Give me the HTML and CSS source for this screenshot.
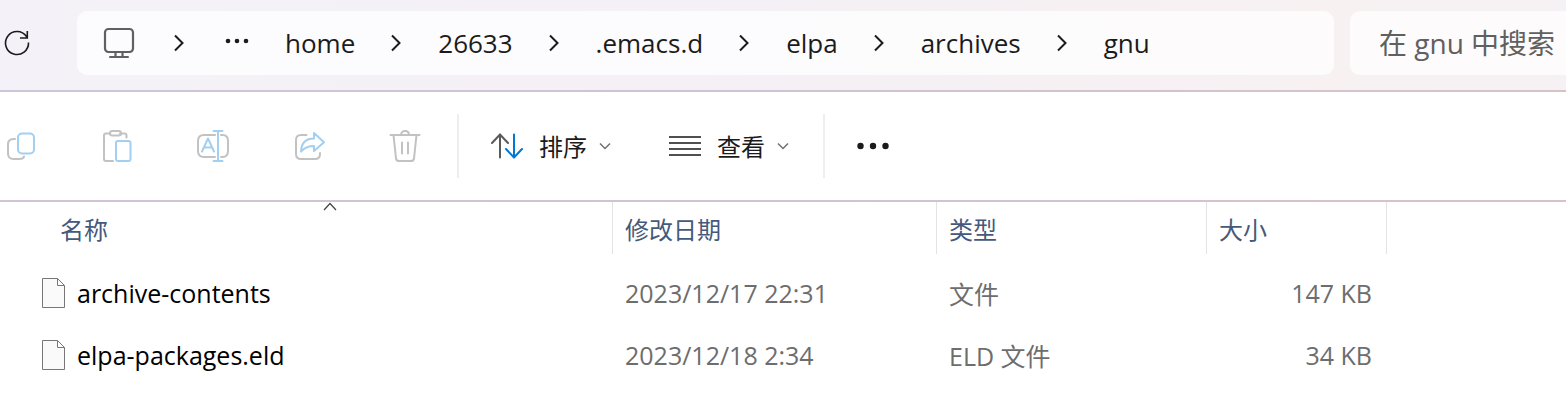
FILE: index.html
```html
<!DOCTYPE html>
<html lang="zh-CN">
<head>
<meta charset="utf-8">
<title>gnu</title>
<link rel="stylesheet" href="styles.css">
</head>
<body>
<header class="navbar">
  <button class="icon-btn refresh" aria-label="刷新">
    <svg width="28" height="28" viewBox="0 0 28 28" fill="none" stroke="#1b1b1b" stroke-width="1.6"><path d="M25.5 13.5A11.5 11.5 0 1 1 23.5 7.500L24.500 9M24.300 2V9H17"/></svg>
  </button>
  <nav class="address" aria-label="地址">
    <button class="icon-btn" aria-label="此电脑">
      <svg width="32" height="32" viewBox="0 0 32 32" fill="none" stroke="#606060" stroke-width="2.2"><rect x="2" y="2" width="28" height="23" rx="3.5"/><path d="M12.500 25v5M19.500 25v5"/><path d="M7 30h18" stroke-width="2" stroke-linecap="round"/></svg>
    </button>
    <svg class="sep first" width="10" height="18" viewBox="0 0 10 18"><path d="M1 1.500 8.500 9 1 16.500"/></svg>
    <button class="icon-btn more" aria-label="更多">
      <svg width="24" height="18" viewBox="0 0 24 18" fill="#1b1b1b"><circle cx="3" cy="7" r="2.300"/><circle cx="12" cy="7" r="2.300"/><circle cx="21" cy="7" r="2.300"/></svg>
    </button>
    <button class="crumb">home</button>
    <svg class="sep" width="10" height="18" viewBox="0 0 10 18"><path d="M1 1.500 8.500 9 1 16.500"/></svg>
    <button class="crumb">26633</button>
    <svg class="sep" width="10" height="18" viewBox="0 0 10 18"><path d="M1 1.500 8.500 9 1 16.500"/></svg>
    <button class="crumb">.emacs.d</button>
    <svg class="sep" width="10" height="18" viewBox="0 0 10 18"><path d="M1 1.500 8.500 9 1 16.500"/></svg>
    <button class="crumb">elpa</button>
    <svg class="sep" width="10" height="18" viewBox="0 0 10 18"><path d="M1 1.500 8.500 9 1 16.500"/></svg>
    <button class="crumb">archives</button>
    <svg class="sep" width="10" height="18" viewBox="0 0 10 18"><path d="M1 1.500 8.500 9 1 16.500"/></svg>
    <button class="crumb">gnu</button>
  </nav>
  <input class="search" type="text" aria-label="搜索" placeholder="在 gnu 中搜索">
</header>

<div class="toolbar" role="toolbar">
  <div class="tools">
    <button class="icon-btn" aria-label="复制" disabled>
      <svg class="tool" width="36" height="36" viewBox="0 0 36 36"><path class="g" d="M12 11h-1.500Q5 11 5 16.500V25.500Q5 31 10.500 31H16Q20.500 31 21 28.500"/><rect class="b" x="15" y="5.500" width="16" height="20" rx="4"/></svg>
    </button>
    <button class="icon-btn" aria-label="粘贴" disabled>
      <svg class="tool" width="36" height="36" viewBox="0 0 36 36"><path class="g" d="M11 5.500H7Q5 5.500 5 7.500V31Q5 33 7 33H14M21 5.500H25.500Q27.500 5.500 27.500 7.500V9.500"/><rect class="g" x="11" y="3" width="11" height="4.500" rx="2.200"/><rect class="b" x="17" y="13" width="14.500" height="20" rx="2"/></svg>
    </button>
    <button class="icon-btn" aria-label="重命名" disabled>
      <svg class="tool" width="36" height="36" viewBox="0 0 36 36"><path class="g" d="M20 7H9Q3 7 3 13V23Q3 29 9 29H20M26 7H27.500Q33 7 33 13V23Q33 29 27.500 29H26"/><path class="b" d="M23 3V33M18.500 3H27.500M18.500 33H27.500M7 23.500 13 10.500 19 23.500M9 19.500H17"/></svg>
    </button>
    <button class="icon-btn" aria-label="共享" disabled>
      <svg class="tool" width="36" height="36" viewBox="0 0 36 36"><path class="g" d="M15.500 7H10Q5 7 5 12V26Q5 31 10 31H24Q29 31 29 26V25"/><path class="b" d="M23 5 33 14.300 23 23V18Q15 18 10 23.500Q10.500 10.500 23 10.500Z"/></svg>
    </button>
    <button class="icon-btn" aria-label="删除" disabled>
      <svg class="tool" width="36" height="36" viewBox="0 0 36 36"><path class="g" d="M3.500 7H32.500M6.500 7 9 30.500Q9.400 33 12 33H24Q26.600 33 27 30.500L29.500 7M14 7C14 1.700 22 1.700 22 7M15 14.500V25.500M21 14.500V25.500"/></svg>
    </button>
  </div>
  <span class="divider"></span>
  <div class="menus">
    <button class="menu">
      <svg width="32" height="32" viewBox="0 0 32 32" fill="none" stroke-width="2" stroke-linecap="round"><path stroke="#5a5a5a" d="M9 27.500V4.500M1 13 9 4.500 17 13"/><path stroke="#0078d4" d="M23 4.500V27.500M15 19 23 27.500 31 19"/></svg>
      <span>排序</span>
      <svg class="caret" width="12" height="8" viewBox="0 0 12 8"><path d="M1 1.500 6 6.500 11 1.500"/></svg>
    </button>
    <button class="menu">
      <svg width="32" height="32" viewBox="0 0 32 32" stroke="#505050" stroke-width="2"><path d="M0 7H32M0 13H32M0 19H32M0 25H32"/></svg>
      <span>查看</span>
      <svg class="caret" width="12" height="8" viewBox="0 0 12 8"><path d="M1 1.500 6 6.500 11 1.500"/></svg>
    </button>
  </div>
  <span class="divider"></span>
  <button class="icon-btn" aria-label="查看更多">
    <svg width="32" height="8" viewBox="0 0 32 8" fill="#1b1b1b"><circle cx="3.500" cy="4" r="3.200"/><circle cx="16" cy="4" r="3.200"/><circle cx="28.500" cy="4" r="3.200"/></svg>
  </button>
</div>

<table class="files">
  <colgroup><col class="c-name"><col class="c-date"><col class="c-type"><col class="c-size"><col></colgroup>
  <thead>
    <tr>
      <th class="name" aria-sort="ascending"><button class="sort">名称<svg class="sort-mark" width="14" height="9" viewBox="0 0 14 9"><path d="M1 8 7 1.500 13 8"/></svg></button></th>
      <th><button class="sort">修改日期</button></th>
      <th><button class="sort">类型</button></th>
      <th><button class="sort">大小</button></th>
      <td></td>
    </tr>
  </thead>
  <tbody>
    <tr>
      <td class="name"><div class="file"><svg width="24" height="30" viewBox="0 0 24 30"><path d="M.5.500H15.500L22.500 7.500V29.500H.5ZM15.500.500V7.500H22.500"/></svg><span>archive-contents</span></div></td>
      <td>2023/12/17 22:31</td><td>文件</td><td class="size">147 KB</td><td></td>
    </tr>
    <tr>
      <td class="name"><div class="file"><svg width="24" height="30" viewBox="0 0 24 30"><path d="M.5.500H15.500L22.500 7.500V29.500H.5ZM15.500.500V7.500H22.500"/></svg><span>elpa-packages.eld</span></div></td>
      <td>2023/12/18 2:34</td><td>ELD 文件</td><td class="size">34 KB</td><td></td>
    </tr>
  </tbody>
</table>
</body>
</html>
```
FILE: styles.css
```css
* { box-sizing: border-box; }

body {
  margin: 0;
  background: #fff;
  color: #1b1b1b;
  font-family: "Open Sans", "Noto Sans CJK SC", sans-serif;
  font-size: 24px;
  overflow-x: hidden;
}

svg { display: block; flex: none; }

button {
  margin: 0;
  padding: 0;
  border: 0;
  background: none;
  color: inherit;
  font: inherit;
}

.navbar {
  display: flex;
  align-items: center;
  height: 92px;
  padding: 0 0 4px 3px;
  border-bottom: 2px solid;
  border-image: linear-gradient(90deg, #cec5d8, #cfc3d3 50%, #d8c2c8) 1;
  background: linear-gradient(90deg, #f4f2f8, #f5f0f5 50%, #f7f1f2 85%, #f6f1f4);
}

.refresh { width: 74px; }

.address {
  display: flex;
  flex: 1;
  align-items: center;
  height: 64px;
  padding-left: 26px;
  border-radius: 10px;
  background: linear-gradient(90deg, #fcfcfe, #fdfbfc);
}

.crumb {
  font-size: 26px;
  line-height: 36px;
}

.sep {
  margin: 0 37px 0 36px;
  fill: none;
  stroke: #1b1b1b;
  stroke-width: 2;
}

.sep.first { margin: 0 41px 0 39px; }

.more { margin-right: 36px; }

.search {
  width: 216px;
  height: 64px;
  margin-left: 16px;
  padding: 0 0 0 29px;
  border: 0;
  border-radius: 10px 0 0 10px;
  background: #fdfbfc;
  color: #606060;
  font: 28px/40px "Open Sans", "Noto Sans CJK SC", sans-serif;
}

.search::placeholder { color: #606060; opacity: 1; }

.toolbar {
  display: flex;
  align-items: center;
  gap: 32px;
  height: 110px;
  padding-left: 3px;
  border-bottom: 2px solid;
  border-image: linear-gradient(90deg, #cec5d8, #cfc3d3 50%, #d8c2c8) 1;
}

.tools { display: flex; gap: 60px; padding-right: 2px; }

.tool { fill: none; stroke-width: 2; stroke-linecap: round; stroke-linejoin: round; }
.g { stroke: #c2c2c2; }
.b { stroke: #a3cff0; }

.divider { width: 2px; height: 64px; background: #eee; }

.menus { display: flex; gap: 58px; padding-right: 2px; }

.menu { display: flex; align-items: center; gap: 12px; }
.menu span { padding: 2px 0 0 4px; line-height: 36px; }

.caret { fill: none; stroke: #707070; stroke-width: 1.5; }

.files {
  width: 100%;
  table-layout: fixed;
  border-collapse: separate;
  border-spacing: 0;
}

.c-name { width: 613px; }
.c-date { width: 324px; }
.c-type { width: 270px; }
.c-size { width: 180px; }

.files th {
  padding: 0;
  border-right: 1px solid #e3e3e3;
  color: #44597c;
  font-weight: 400;
}

.files th.name { padding-left: 48px; }

.sort {
  display: block;
  position: relative;
  width: 100%;
  height: 52px;
  padding: 4px 12px 0;
  line-height: 48px;
  text-align: left;
}

.sort-mark {
  position: absolute;
  top: 0;
  left: 50%;
  margin-left: -7px;
  fill: none;
  stroke: #444;
  stroke-width: 1.2;
}

.files tbody::before {
  content: "";
  display: block;
  height: 8px;
}

.files tbody td {
  height: 62px;
  padding: 0 15px 0 12px;
  color: #6d6d6d;
  font-size: 25px;
  white-space: nowrap;
}

.files tbody td.name { padding-left: 42px; color: #000; }
.files tbody td.size { text-align: right; }

.file { display: flex; align-items: center; gap: 11px; }
.file svg { fill: #fafafa; stroke: #777; }
```
